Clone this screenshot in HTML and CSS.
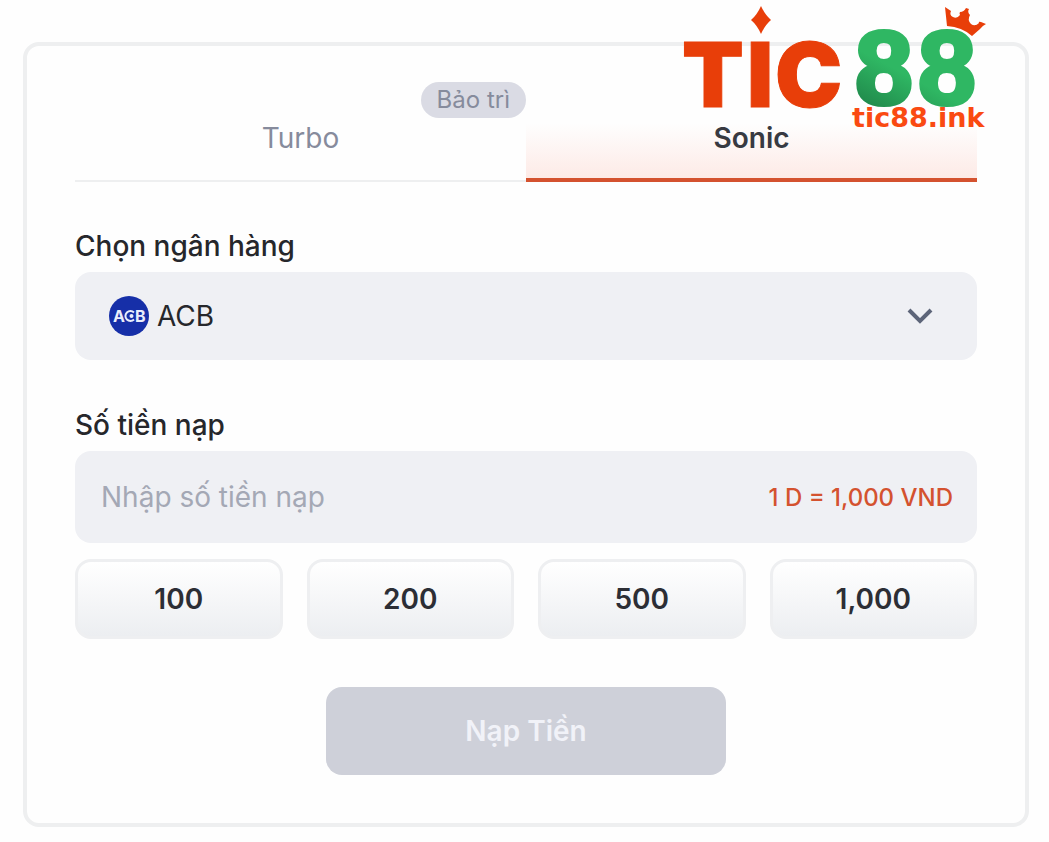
FILE: index.html
```html
<!DOCTYPE html>
<html lang="vi">
<head>
    <meta charset="UTF-8">
    <meta name="viewport" content="width=device-width, initial-scale=1.0">
    <title>Nạp Tiền</title>
    <link rel="stylesheet" href="styles.css">
</head>
<body>
    <div class="container">
        <!-- Brand logo, lies over the card corner -->
        <svg class="logo" width="320" height="136" viewBox="0 0 320 136" role="img" aria-label="TIC88">
            <defs>
                <linearGradient id="green" gradientUnits="userSpaceOnUse" x1="230" y1="30" x2="180" y2="125">
                    <stop offset="0.35" stop-color="#2fb763"/>
                    <stop offset="0.9" stop-color="#1c7d45"/>
                </linearGradient>
            </defs>
            <path d="M89 6Q93 15 99 20Q93 25 89 34Q85 25 79 20Q85 15 89 6Z" fill="#e83e09"/>
            <text class="logo-tic" x="10" y="107">T</text>
            <text class="logo-tic" x="75" y="107">I</text>
            <text class="logo-tic" x="103" y="107">C</text>
            <text class="logo-88" x="183" y="104">8</text>
            <text class="logo-88" x="246" y="104">8</text>
            <path d="M273 7L279 11Q277 15 281 17Q285 19 288 15Q287 13 288 12Q292 12 294 8L297 9Q295 12 298 15Q295 20 299 24Q303 27 307 23Q306 21 309 22L314 24Q310 26 308 29L300 36Q290 27 275 26Z" fill="#e83e09"/>
            <text class="logo-url" x="180" y="127">tic88.ink</text>
        </svg>

        <form class="card">
            <div class="tabs">
                <button type="button" class="tab">Turbo<span class="badge">Bảo trì</span></button>
                <button type="button" class="tab active">Sonic</button>
            </div>

            <div class="field">
                <label for="bank">Chọn ngân hàng</label>
                <div class="box">
                    <svg class="bank-logo" width="40" height="40" viewBox="0 0 40 40" aria-hidden="true">
                        <circle cx="20" cy="20" r="20" fill="#162fa8"/>
                        <text x="4" y="26">A</text>
                        <text x="26" y="26">B</text>
                        <path d="M25 16.5A5 5 0 1 0 25 23.5" fill="none" stroke="#e9edfb" stroke-width="2"/>
                        <circle cx="22.5" cy="20" r="2" fill="#e9edfb"/>
                    </svg>
                    <select id="bank">
                        <option>ACB</option>
                    </select>
                    <svg class="chevron" width="26" height="16" viewBox="0 0 26 16" aria-hidden="true">
                        <path d="M2 2L13 13L24 2" fill="none" stroke="#5d6579" stroke-width="4"/>
                    </svg>
                </div>
            </div>

            <div class="field">
                <label for="amount">Số tiền nạp</label>
                <div class="box">
                    <input type="text" id="amount" placeholder="Nhập số tiền nạp">
                    <span class="rate">1 D = 1,000 VND</span>
                </div>
                <!-- Quick amounts -->
                <div class="amounts">
                    <button type="button">100</button>
                    <button type="button">200</button>
                    <button type="button">500</button>
                    <button type="button">1,000</button>
                </div>
            </div>

            <button type="submit" class="submit" disabled>Nạp Tiền</button>
        </form>
    </div>
</body>
</html>
```
FILE: styles.css
```css
* {
    box-sizing: border-box;
}

body {
    margin: 0;
    background: #fefefe;
    color: #26272b;
    font-family: Inter, sans-serif;
    font-size: 28px;
}

button, input, select {
    font: inherit;
    color: inherit;
    border: none;
}

.container {
    position: relative;
    padding: 42px 20px 15px 23px;
}

.card {
    padding: 48px;
    border: 4px solid #eeeff0;
    border-radius: 16px;
}

/* Logo */
.logo {
    position: absolute;
    top: 0;
    right: 57px;
    z-index: 1;
}

.logo-tic {
    font-size: 90px;
    font-weight: 900;
    fill: #e83e09;
    stroke: #e83e09;
    stroke-width: 1px;
}

.logo-88 {
    font-family: "Liberation Sans", sans-serif;
    font-size: 104px;
    font-weight: bold;
    fill: url(#green);
    stroke: url(#green);
    stroke-width: 4px;
}

.logo-url {
    font-family: "DejaVu Sans", sans-serif;
    font-size: 27px;
    font-weight: bold;
    fill: #fa4a12;
}

/* Tabs */
.tabs {
    display: grid;
    grid-template-columns: 1fr 1fr;
    margin-bottom: 47px;
}

.tab {
    position: relative;
    height: 88px;
    padding: 2px 0 0;
    background: none;
    border-bottom: 2px solid #eeeff0;
    color: #868b9c;
}

.tab.active {
    padding-top: 4px;
    background: linear-gradient(#fefefe 35%, #fdeae6);
    border-bottom: 4px solid #d4522f;
    color: #383a42;
    font-weight: 600;
}

.badge {
    position: absolute;
    top: -12px;
    right: 0;
    padding: 0 16px;
    border-radius: 18px;
    background: #dadbe4;
    font-size: 24px;
    line-height: 36px;
}

/* Fields */
.field {
    margin-bottom: 48px;
}

label {
    display: block;
    margin-bottom: 8px;
    line-height: 35px;
    font-weight: 500;
}

.box {
    position: relative;
    display: flex;
    align-items: center;
    border-radius: 16px;
    background: #eff0f4;
}

.bank-logo {
    position: absolute;
    left: 34px;
    pointer-events: none;
}

.bank-logo text {
    font-size: 16px;
    font-weight: 700;
    fill: #e9edfb;
}

select {
    appearance: none;
    width: 100%;
    height: 88px;
    padding: 0 82px;
    background: none;
}

.chevron {
    position: absolute;
    right: 44px;
    pointer-events: none;
}

input {
    flex: 1;
    min-width: 0;
    height: 92px;
    padding: 0 26px;
    background: none;
}

input::placeholder {
    color: #a4a8b5;
}

.rate {
    padding-right: 24px;
    color: #d4522f;
    font-size: 24px;
    font-weight: 500;
}

/* Amount buttons */
.amounts {
    display: grid;
    grid-template-columns: repeat(4, 1fr);
    gap: 24px;
    margin-top: 16px;
}

.amounts button {
    height: 80px;
    border: 3px solid #eeeff1;
    border-radius: 16px;
    background: linear-gradient(#fff, #eceef1);
    color: #2c2e35;
    font-weight: 600;
}

.submit {
    display: block;
    width: 400px;
    max-width: 100%;
    height: 88px;
    margin: 0 auto;
    border-radius: 16px;
    background: #ced0d9;
    color: #f1f2f8;
    font-weight: 600;
}
```
